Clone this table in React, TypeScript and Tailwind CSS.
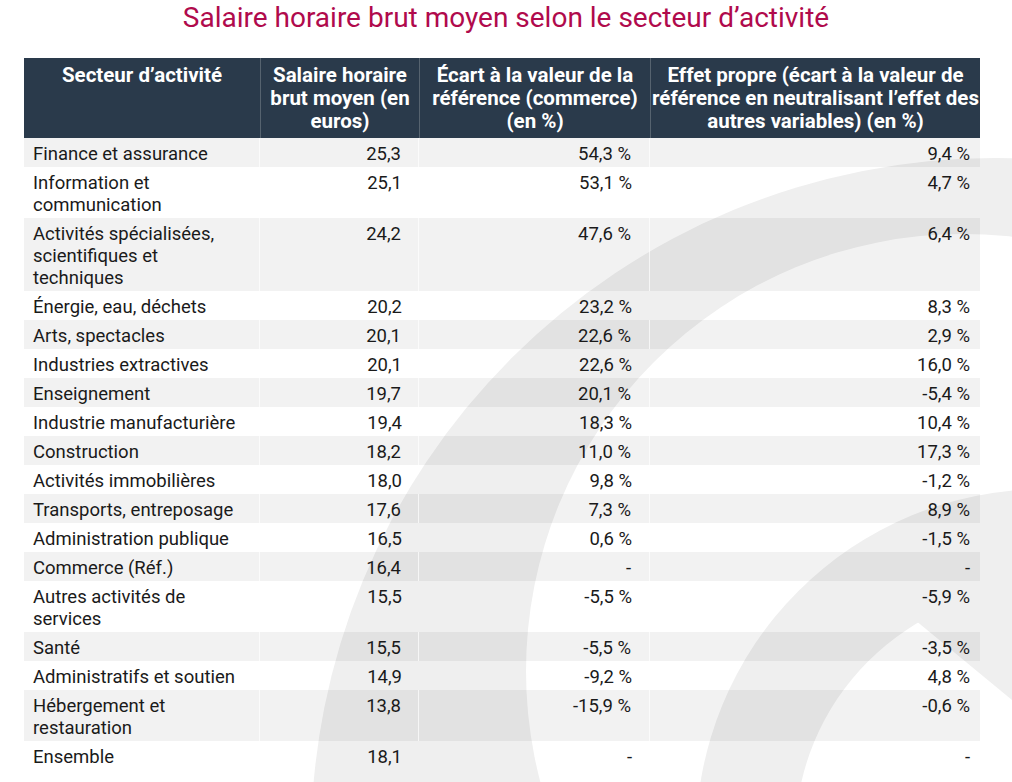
const rows: [string, string, string, string][] = [
  ["Finance et assurance", "25,3", "54,3 %", "9,4 %"],
  ["Information et\ncommunication", "25,1", "53,1 %", "4,7 %"],
  ["Activités spécialisées,\nscientifiques et\ntechniques", "24,2", "47,6 %", "6,4 %"],
  ["Énergie, eau, déchets", "20,2", "23,2 %", "8,3 %"],
  ["Arts, spectacles", "20,1", "22,6 %", "2,9 %"],
  ["Industries extractives", "20,1", "22,6 %", "16,0 %"],
  ["Enseignement", "19,7", "20,1 %", "-5,4 %"],
  ["Industrie manufacturière", "19,4", "18,3 %", "10,4 %"],
  ["Construction", "18,2", "11,0 %", "17,3 %"],
  ["Activités immobilières", "18,0", "9,8 %", "-1,2 %"],
  ["Transports, entreposage", "17,6", "7,3 %", "8,9 %"],
  ["Administration publique", "16,5", "0,6 %", "-1,5 %"],
  ["Commerce (Réf.)", "16,4", "-", "-"],
  ["Autres activités de\nservices", "15,5", "-5,5 %", "-5,9 %"],
  ["Santé", "15,5", "-5,5 %", "-3,5 %"],
  ["Administratifs et soutien", "14,9", "-9,2 %", "4,8 %"],
  ["Hébergement et\nrestauration", "13,8", "-15,9 %", "-0,6 %"],
  ["Ensemble", "18,1", "-", "-"],
];

const cols = "grid grid-cols-[236px_159px_231px_330px]";

function Backdrop() {
  return (
    <svg
      className="absolute inset-0"
      width={1012}
      height={782}
      viewBox="0 0 1012 782"
    >
      <defs>
        <clipPath id="below">
          <polygon points="-55,-180 1885,1420 -55,1420" />
        </clipPath>
      </defs>
      <circle cx={995} cy={842} r={684} fill="#efefef" />
      <circle cx={963} cy={671} r={437} fill="#ffffff" />
      <circle cx={1045} cy={838} r={349} fill="#efefef" />
      <circle cx={1045} cy={838} r={250} fill="#ffffff" clipPath="url(#below)" />
    </svg>
  );
}

export default function App() {
  return (
    <div className="relative w-[1012px] h-[782px] overflow-hidden bg-white font-['Roboto','Liberation_Sans',sans-serif]">
      <Backdrop />
      <div className="relative flex flex-col">
        <h1 className="pt-[2px] text-center text-[28px] leading-[32px] text-[#b00a4c]">
          Salaire horaire brut moyen selon le secteur d’activité
        </h1>

        <div className="ml-[24px] mt-[24px] w-[956px]">
          <div className={`${cols} bg-[#2a3a4b] text-white font-bold text-[20.5px] leading-[23px] text-center`}>
            <div className="pt-[6px] pb-[5px] whitespace-nowrap">Secteur d’activité</div>
            <div className="pt-[6px] pb-[5px] border-l border-[#56636f] whitespace-nowrap">
              Salaire horaire
              <br />
              brut moyen (en
              <br />
              euros)
            </div>
            <div className="pt-[6px] pb-[5px] border-l border-[#56636f] whitespace-nowrap">
              Écart à la valeur de la
              <br />
              référence (commerce)
              <br />
              (en %)
            </div>
            <div className="pt-[6px] pb-[5px] border-l border-[#56636f] whitespace-nowrap">
              Effet propre (écart à la valeur de
              <br />
              référence en neutralisant l’effet des
              <br />
              autres variables) (en %)
            </div>
          </div>

          {rows.map((r, i) => {
            const shaded = i % 2 === 0;
            const sep = shaded ? "border-r border-white/70" : "";
            return (
              <div
                key={i}
                className={`${cols} text-[18.5px] leading-[22px] text-[#1a1a1a] ${shaded ? "bg-black/[0.05]" : ""}`}
              >
                <div className={`pl-[9px] pt-[5px] pb-[2px] whitespace-pre-line ${sep}`}>{r[0]}</div>
                <div className={`pr-[17px] pt-[5px] pb-[2px] text-right ${sep}`}>{r[1]}</div>
                <div className={`pr-[18px] pt-[5px] pb-[2px] text-right ${sep}`}>{r[2]}</div>
                <div className="pr-[10px] pt-[5px] pb-[2px] text-right">{r[3]}</div>
              </div>
            );
          })}
        </div>
      </div>
    </div>
  );
}
